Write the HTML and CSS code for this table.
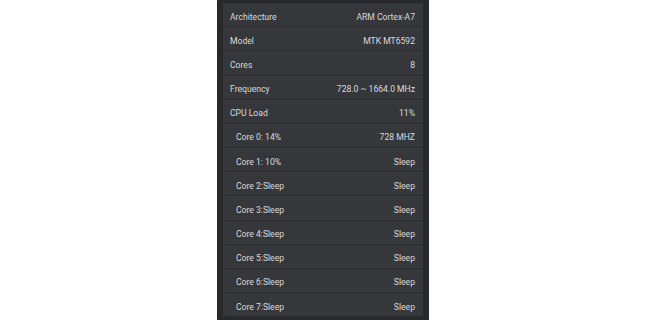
FILE: index.html
```html
<!DOCTYPE html>
<html>
<head>
<meta charset="utf-8">
<link rel="stylesheet" href="styles.css">
</head>
<body>
<div class="page">
  <div class="panel">
    <div class="card">
      <div class="row"><span>Architecture</span><span>ARM Cortex-A7</span></div>
      <div class="row"><span>Model</span><span>MTK MT6592</span></div>
      <div class="row"><span>Cores</span><span>8</span></div>
      <div class="row"><span>Frequency</span><span>728.0 ~ 1664.0 MHz</span></div>
      <div class="row"><span>CPU Load</span><span>11%</span></div>
      <div class="row sub"><span>Core 0: 14%</span><span>728 MHZ</span></div>
      <div class="row sub"><span>Core 1: 10%</span><span>Sleep</span></div>
      <div class="row sub"><span>Core 2:Sleep</span><span>Sleep</span></div>
      <div class="row sub"><span>Core 3:Sleep</span><span>Sleep</span></div>
      <div class="row sub"><span>Core 4:Sleep</span><span>Sleep</span></div>
      <div class="row sub"><span>Core 5:Sleep</span><span>Sleep</span></div>
      <div class="row sub"><span>Core 6:Sleep</span><span>Sleep</span></div>
      <div class="row sub"><span>Core 7:Sleep</span><span>Sleep</span></div>
    </div>
  </div>
</div>
</body>
</html>
```

FILE: styles.css
```css
html, body {
  margin: 0;
  padding: 0;
  background: #ffffff;
  overflow: hidden;
}
.page {
  display: flex;
  justify-content: center;
  height: 320px;
  padding-left: 1px;
}
.panel {
  width: 212px;
  height: 320px;
  background: #28292c;
  padding: 3px 6px 0 6px;
  box-sizing: border-box;
  overflow: hidden;
}
.card {
  background: #35373b;
  font-family: Roboto, "Liberation Sans", sans-serif;
  font-size: 8.6px;
  color: #dadada;
}
.row {
  display: flex;
  justify-content: space-between;
  align-items: center;
  box-sizing: border-box;
  height: 24.18px;
  padding: 4px 8px 0 7px;
  border-bottom: 1px solid #2b2c30;
}
.row.sub {
  margin-left: 2px;
  padding-left: 11px;
}
```
